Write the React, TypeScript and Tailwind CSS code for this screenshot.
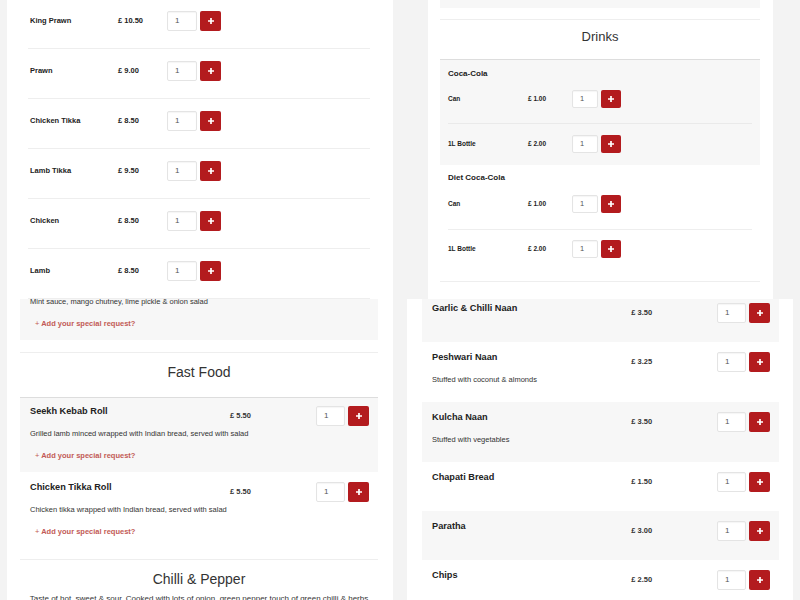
import React from "react";

const RED = "bg-[#b31b1e]";

function Plus({ size = 6 }: { size?: number }) {
  return (
    <svg width={size} height={size} viewBox="0 0 6 6">
      <path d="M3 0v6M0 3h6" stroke="white" strokeWidth="1.7" />
    </svg>
  );
}

function Qty({ w, h, bw, fs }: { w: string; h: string; bw: string; fs: string }) {
  return (
    <div className="flex gap-[3px] shrink-0">
      <div className={`${w} ${h} ${fs} flex items-center pl-[7px] border border-[#e4e4e4] rounded-[2px] bg-white text-[#555] shadow-[inset_0_1px_1px_rgba(0,0,0,0.04)]`}>
        1
      </div>
      <div className={`${bw} ${h} ${RED} rounded-[2px] flex items-center justify-center`}>
        <Plus />
      </div>
    </div>
  );
}

const topLeftRows = [
  ["King Prawn", "£ 10.50"],
  ["Prawn", "£ 9.00"],
  ["Chicken Tikka", "£ 8.50"],
  ["Lamb Tikka", "£ 9.50"],
  ["Chicken", "£ 8.50"],
  ["Lamb", "£ 8.50"],
];

function TopLeft() {
  return (
    <div className="overflow-hidden bg-[#f3f3f3] px-[7px]">
      <div className="h-full flex flex-col bg-white pl-[21px] pr-[23px]">
        <div className="-mt-[1px] flex flex-col">
          {topLeftRows.map(([n, p]) => (
            <div key={n} className="h-[50px] shrink-0 pt-[12px] border-b border-[#eeeeee]">
              <div className="flex items-center h-[20px] pl-[2px] text-[#222]">
                <div className="w-[88px] text-[7.5px] font-bold">{n}</div>
                <div className="w-[49px] text-[7.5px] font-bold">{p}</div>
                <Qty w="w-[30px]" h="h-[20px]" bw="w-[21px]" fs="text-[8px]" />
              </div>
            </div>
          ))}
        </div>
      </div>
    </div>
  );
}

function DrinkRow({ n, p, cls }: { n: string; p: string; cls: string }) {
  return (
    <div className={`${cls} flex items-center text-[#222]`}>
      <div className="w-[80px] text-[6.5px] font-bold">{n}</div>
      <div className="w-[44px] text-[6.5px] font-bold">{p}</div>
      <Qty w="w-[26px]" h="h-[18px]" bw="w-[20px]" fs="text-[7.5px]" />
    </div>
  );
}

function TopRight() {
  return (
    <div className="overflow-hidden bg-[#f3f3f3] pl-[28px] pr-[27px]">
      <div className="h-full flex flex-col bg-white pl-[12px] pr-[13px]">
        <div className="h-[8px] shrink-0 bg-[#f7f7f7]" />
        <div className="mt-[11px] h-[41px] shrink-0 border-t border-b border-t-[#eeeeee] border-b-[#dddddd] pt-[10px] text-center text-[13px] leading-[13px] text-[#333]">
          Drinks
        </div>
        <div className="bg-[#f7f7f7] pt-[9px] px-[8px]">
          <div className="h-[10px] text-[8px] leading-[10px] font-bold text-[#222]">Coca-Cola</div>
          <DrinkRow n="Can" p="£ 1.00" cls="mt-[11px] pb-[15px] border-b border-[#eaeaea]" />
          <DrinkRow n="1L Bottle" p="£ 2.00" cls="pt-[11px] pb-[12px]" />
        </div>
        <div className="pt-[8px] px-[8px] border-b border-[#eeeeee]">
          <div className="h-[10px] text-[8px] leading-[10px] font-bold text-[#222]">Diet Coca-Cola</div>
          <DrinkRow n="Can" p="£ 1.00" cls="mt-[12px] pb-[16px] border-b border-[#eeeeee]" />
          <DrinkRow n="1L Bottle" p="£ 2.00" cls="pt-[10px] pb-[23px]" />
        </div>
      </div>
    </div>
  );
}

function Request({ cls = "mt-[12px]" }: { cls?: string }) {
  return (
    <div className={`${cls} pl-[5px] text-[7.5px] leading-[10px] font-bold text-[#c25a55]`}>
      <span className="font-normal">+</span> Add your special request?
    </div>
  );
}

function Item({
  name,
  price,
  desc,
  request,
  gray,
  cls,
}: {
  name: string;
  price: string;
  desc?: string;
  request?: boolean;
  gray?: boolean;
  cls: string;
}) {
  return (
    <div className={`${cls} shrink-0 ${gray ? "bg-[#f7f7f7]" : "bg-white"} pl-[10px] pr-[9px]`}>
      <div className="flex items-start h-[20px] text-[#222]">
        <div className="w-[200px] text-[9.2px] leading-[11px] font-bold">{name}</div>
        <div className="w-[86px] self-center text-[7.5px] font-bold text-[#333]">{price}</div>
        <Qty w="w-[29px]" h="h-[20px]" bw="w-[21px]" fs="text-[8px]" />
      </div>
      {desc && <div className="mt-[3px] text-[7.5px] leading-[10px] text-[#333]">{desc}</div>}
      {request && <Request />}
    </div>
  );
}

function Heading({ text, cls }: { text: string; cls: string }) {
  return (
    <div className={`${cls} shrink-0 text-center text-[14px] leading-[14px] text-[#333]`}>{text}</div>
  );
}

function BottomLeft() {
  return (
    <div className="overflow-hidden bg-[#f3f3f3] px-[7px]">
      <div className="h-full flex flex-col bg-white pl-[13px] pr-[15px]">
        <div className="-mt-[10px] shrink-0 bg-[#f7f7f7] pt-[8px] pb-[11px] px-[10px]">
          <div className="text-[7.5px] leading-[10px] text-[#333]">
            Mint sauce, mango chutney, lime pickle &amp; onion salad
          </div>
          <Request />
        </div>
        <Heading
          text="Fast Food"
          cls="mt-[12px] h-[46px] pt-[12px] border-t border-b border-t-[#eeeeee] border-b-[#dddddd]"
        />
        <Item
          gray
          cls="pt-[8px] pb-[11px]"
          name="Seekh Kebab Roll"
          price="£ 5.50"
          desc="Grilled lamb minced wrapped with Indian bread, served with salad"
          request
        />
        <Item
          cls="pt-[10px] pb-[11px]"
          name="Chicken Tikka Roll"
          price="£ 5.50"
          desc="Chicken tikka wrapped with Indian bread, served with salad"
          request
        />
        <div className="mt-[11px] shrink-0 border-t border-[#eeeeee] pt-[12px]">
          <Heading text="Chilli & Pepper" cls="" />
          <div className="mt-[7px] text-center text-[8px] leading-[11px] text-[#333]">
            Taste of hot, sweet &amp; sour. Cooked with lots of onion, green pepper touch of green chilli &amp; herbs
          </div>
        </div>
      </div>
    </div>
  );
}

function BottomRight() {
  return (
    <div className="overflow-hidden bg-[#f3f3f3] px-[7px]">
      <div className="h-full flex flex-col bg-white pl-[15px] pr-[14px]">
        <Item gray cls="-mt-[6px] h-[49px] pt-[10px]" name="Garlic & Chilli Naan" price="£ 3.50" />
        <Item cls="h-[60px] pt-[10px]" name="Peshwari Naan" price="£ 3.25" desc="Stuffed with coconut & almonds" />
        <Item gray cls="h-[60px] pt-[10px]" name="Kulcha Naan" price="£ 3.50" desc="Stuffed with vegetables" />
        <Item cls="h-[49px] pt-[10px]" name="Chapati Bread" price="£ 1.50" />
        <Item gray cls="h-[49px] pt-[10px]" name="Paratha" price="£ 3.00" />
        <Item cls="h-[49px] pt-[10px]" name="Chips" price="£ 2.50" />
      </div>
    </div>
  );
}

export default function App() {
  return (
    <div className="w-[800px] h-[600px] grid grid-cols-[400px_400px] grid-rows-[299px_301px] font-['Liberation_Sans',Arial,sans-serif] overflow-hidden">
      <TopLeft />
      <TopRight />
      <BottomLeft />
      <BottomRight />
    </div>
  );
}
